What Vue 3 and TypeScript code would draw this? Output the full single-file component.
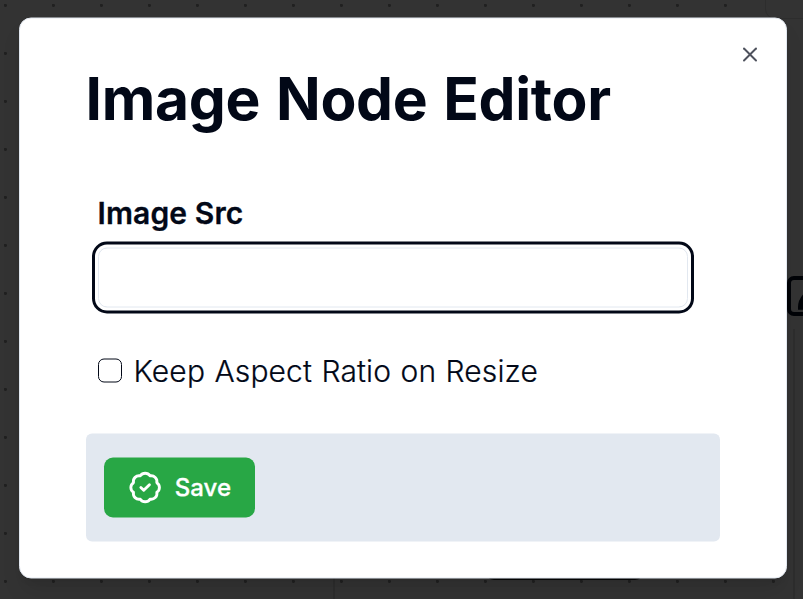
<script setup lang="ts">
import { ref } from 'vue'

const src = ref('')
const keepAspect = ref(false)
</script>

<template>
  <div class="page">
    <div class="line line-left"></div>
    <div class="line line-right"></div>
    <div class="corner-panel"></div>
    <div class="node-button">
      <svg viewBox="0 0 24 24" width="30" height="30" fill="none" stroke="#010307" stroke-width="4" stroke-linecap="round"><path d="M6 21c0-5 3-10 10-14v14z" /></svg>
    </div>
    <div class="dark-tab"></div>
    <section class="dialog" role="dialog">
      <button class="close" type="button" aria-label="Close">
        <svg viewBox="0 0 24 24" width="24" height="24" fill="none" stroke="currentColor" stroke-width="2" stroke-linecap="round" stroke-linejoin="round">
          <path d="M18 6 6 18" /><path d="m6 6 12 12" />
        </svg>
      </button>
      <h1 class="title">Image Node Editor</h1>
      <form class="form" @submit.prevent>
        <label class="label" for="src">Image Src</label>
        <input id="src" v-model="src" class="input" type="text" />
        <label class="check">
          <input v-model="keepAspect" class="box" type="checkbox" />
          <span>Keep Aspect Ratio on Resize</span>
        </label>
      </form>
      <footer class="footer">
        <button class="save" type="button">
          <svg viewBox="0 0 24 24" width="36" height="36" fill="none" stroke="currentColor" stroke-width="2" stroke-linecap="round" stroke-linejoin="round">
            <path d="M3.85 8.62a4 4 0 0 1 4.78-4.77 4 4 0 0 1 6.74 0 4 4 0 0 1 4.78 4.78 4 4 0 0 1 0 6.74 4 4 0 0 1-4.77 4.78 4 4 0 0 1-6.75 0 4 4 0 0 1-4.78-4.77 4 4 0 0 1 0-6.76Z" />
            <path d="m9 12 2 2 4-4" />
          </svg>
          <span>Save</span>
        </button>
      </footer>
    </section>
  </div>
</template>

<style>
body {
  margin: 0;
  overflow: hidden;
}
</style>

<style scoped>
.page {
  position: relative;
  box-sizing: border-box;
  width: 803px;
  height: 599px;
  padding: 17px 0 0 19px;
  overflow: hidden;
  color: #020817;
  font-family: Inter, sans-serif;
  background-color: #333;
  background-image: radial-gradient(circle at 5.4px 5.4px, #202020 1.2px, transparent 1.9px);
  background-size: 48px 48px;
}
.line {
  position: absolute;
  bottom: 0;
  width: 1.5px;
  background: #2d2d2d;
}
.line-left {
  left: 333px;
  height: 24px;
}
.line-right {
  left: 793px;
  height: 270px;
}
.corner-panel {
  position: absolute;
  top: -20px;
  left: 765px;
  width: 60px;
  height: 37px;
  border: 1px solid #2d2d2d;
  border-radius: 10px;
  background: #333;
}
.node-button {
  position: absolute;
  top: 276px;
  left: 787px;
  box-sizing: border-box;
  width: 60px;
  height: 40px;
  padding: 1px 0 0 2px;
  border: 4px solid #010307;
  border-radius: 7px;
  background: #333;
}
.dark-tab {
  position: absolute;
  top: 560px;
  left: 485px;
  width: 159px;
  height: 20px;
  border-radius: 9px;
  background: #050505;
}
.dialog {
  position: relative;
  box-sizing: border-box;
  width: 768px;
  height: 561px;
  padding: 50px 66px 0;
  border: 1px solid #e2e8f0;
  border-radius: 12px;
  background: #fff;
  box-shadow: 0 15px 22px -4px rgba(0, 0, 0, 0.1), 0 6px 9px -6px rgba(0, 0, 0, 0.1);
  transform: translateY(0.5px);
}
.close {
  position: absolute;
  top: 24px;
  right: 24px;
  display: flex;
  padding: 0;
  border: 0;
  color: #4e525d;
  background: none;
}
.title {
  margin: 0 0 0 -0.5px;
  font-size: 58.7px;
  font-weight: 700;
  line-height: 60px;
  letter-spacing: -0.3px;
  word-spacing: 2.2px;
  white-space: nowrap;
}
.form {
  display: flex;
  flex-direction: column;
  align-items: flex-start;
  padding: 66px 0 0 12px;
}
.label {
  margin-left: -0.5px;
  font-size: 30px;
  font-weight: 600;
  line-height: 36px;
  letter-spacing: 0.12px;
  -webkit-text-stroke: 0.3px currentColor;
}
.input {
  box-sizing: border-box;
  width: 590px;
  height: 60px;
  margin: 17px 0 0;
  padding: 12px 18px;
  border: 1px solid #e2e8f0;
  border-radius: 9px;
  outline: 0;
  background: #fff;
  box-shadow: 0 0 0 3px #fff, 0 0 0 6px #020817;
  font: inherit;
}
.check {
  display: flex;
  align-items: center;
  gap: 11.5px;
  margin-top: 45px;
  font-size: 30px;
  font-weight: 300;
  line-height: 36px;
  letter-spacing: 0.13px;
  word-spacing: 0.8px;
  white-space: nowrap;
  -webkit-text-stroke: 0.2px currentColor;
}
.box {
  box-sizing: border-box;
  width: 24px;
  height: 24px;
  margin: 0;
  border: 1px solid #020817;
  border-radius: 6px;
  appearance: none;
}
.footer {
  display: flex;
  box-sizing: border-box;
  width: 634px;
  height: 108px;
  margin-top: 45px;
  padding: 24px 18px;
  border-radius: 6px;
  background: #e2e8f0;
}
.save {
  display: flex;
  align-items: center;
  gap: 12.5px;
  width: 151px;
  height: 60px;
  padding: 0 24px;
  border: 0;
  border-radius: 9px;
  color: #fff;
  background: #28a745;
  font-family: inherit;
  font-size: 24px;
  font-weight: 500;
  line-height: 36px;
  white-space: nowrap;
  -webkit-text-stroke: 0.3px currentColor;
}
</style>
